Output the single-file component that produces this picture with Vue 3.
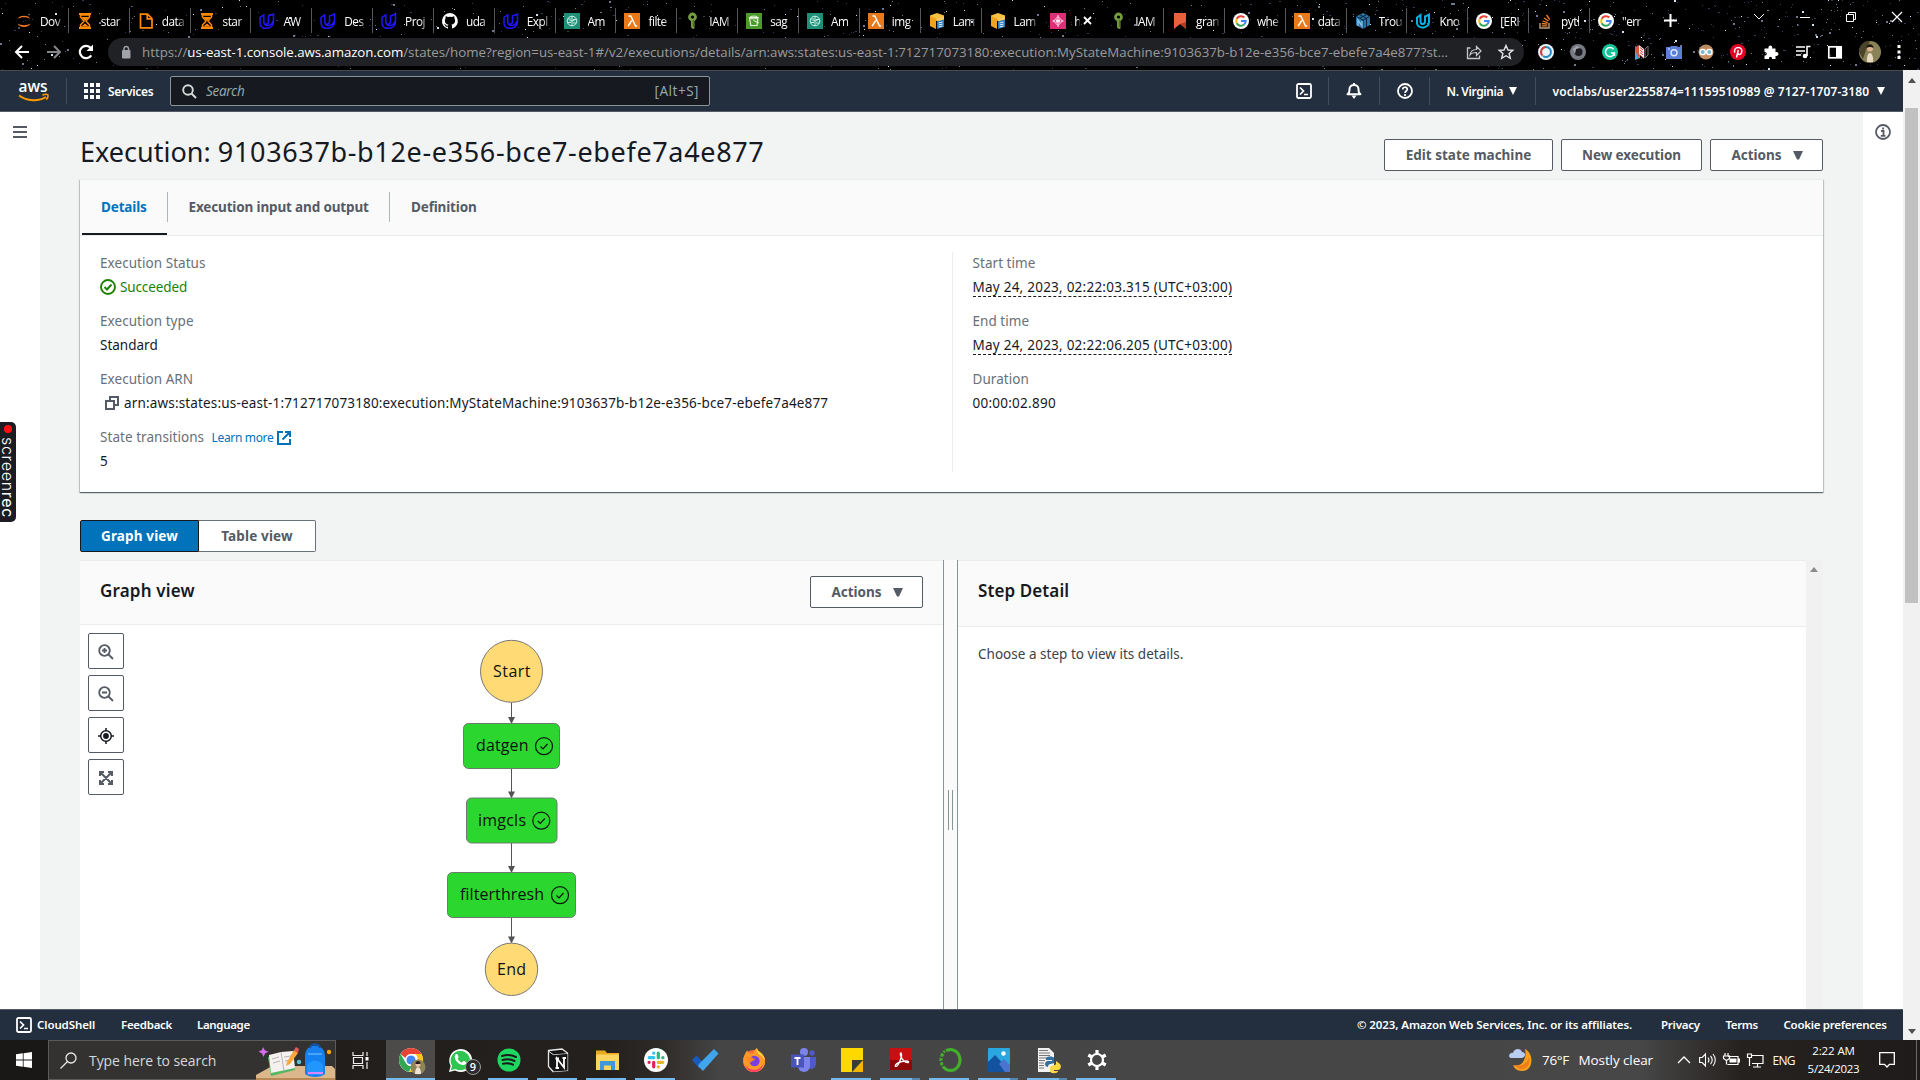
<script setup>
const tabIcons = {
  jupyter: '<path d="M1.500 6C3 1.500 13 1.500 14.500 6 11 3.800 5 3.800 1.500 6zM1.500 10.500C3 15 13 15 14.500 10.500 11 12.700 5 12.700 1.500 10.500z" fill="#f37726"/><circle cx="13" cy="1.600" r=".8" fill="#777"/><circle cx="3" cy="15" r=".9" fill="#777"/>',
  hourglass: '<path d="M2 1h12M2 15h12" stroke="#ff8a00" stroke-width="2"/><path d="M3.500 2h9v2L9 8l3.500 4v2h-9v-2L7 8 3.500 4z" fill="none" stroke="#ff8a00" stroke-width="1.500"/><path d="M4.500 4h7L8 8zM5 13l3-2.500 3 2.500z" fill="#ff8a00"/>',
  file: '<path d="M2.500 1.200h7L14 5.500v9.300H2.500zM9.300 1.500v4.300h4.400" fill="none" stroke="#ff8a00" stroke-width="1.700"/>',
  udacity: '<path d="M1 4.300L4.800 1.800v7c0 3.500 4.700 3 4.700-.5V3l5-2v8c0 7.500-13.500 9-13.500 1zM4.800 9c.5 5 8 4.500 9.400-1" fill="none" stroke="#2015ff" stroke-width="1.500"/>',
  udacity2: '<path d="M2 4.500L5.500 2v6.500c0 3.500 4.500 3.200 4.500-.3V3.500l4-2v7.500c0 6.500-11 7.500-12 1.300z" fill="none" stroke="#02b3e4" stroke-width="2"/>',
  github: '<path d="M8 0a8 8 0 0 0-2.500 15.600c.4.100.5-.2.500-.4v-1.500c-2.200.5-2.700-1-2.700-1-.4-.9-.9-1.200-.9-1.200-.7-.5.1-.5.1-.5.800.1 1.200.8 1.200.8.700 1.200 1.900.9 2.300.7.100-.5.300-.9.500-1.100-1.800-.2-3.600-.9-3.600-4 0-.9.300-1.600.8-2.100-.1-.2-.4-1 .1-2.100 0 0 .7-.2 2.200.8a7.600 7.600 0 0 1 4 0c1.500-1 2.200-.8 2.200-.8.4 1.100.2 1.900.1 2.100.5.600.8 1.300.8 2.100 0 3.100-1.900 3.800-3.700 4 .3.300.6.800.6 1.500v2.200c0 .2.100.5.600.4A8 8 0 0 0 8 0z" fill="#fff"/>',
  sagemaker: '<rect width="16" height="16" fill="#1d9077"/><circle cx="8" cy="8" r="4.800" fill="none" stroke="#d6f3ea"/><path d="M8 3.200v9.600M4 6h3M4 9.500h3M9 6.500h3M9 10h3M5.500 7.700h5" stroke="#d6f3ea" stroke-width=".9"/>',
  lambda: '<rect width="16" height="16" fill="#e9791b"/><path d="M4.500 3h2.300l4.700 10h1.700M7.700 7.500L4.200 13" fill="none" stroke="#fff" stroke-width="1.400"/>',
  iam: '<circle cx="7.500" cy="4" r="3" fill="none" stroke="#759c3e" stroke-width="2.800"/><path d="M6 6h3.500v9.500L8 16l-2-1.500z" fill="#759c3e"/><path d="M8.300 7v7" stroke="#4b612c"/>',
  s3: '<rect width="16" height="16" fill="#4b9b2c"/><path d="M3.500 4.500H12l-1 8H4.800z" fill="none" stroke="#e4f6d8" stroke-width="1.200"/><ellipse cx="7.800" cy="4.500" rx="4.200" ry="1.400" fill="none" stroke="#e4f6d8"/><path d="M7.500 7.500l5.500 2.500" fill="none" stroke="#e4f6d8"/>',
  cube: '<path d="M8 0l7 2.500v4L8 8 1 6.500v-4z" fill="#f7c143"/><path d="M1 3l6 2.500V16l-6-3z" fill="#f0a31e"/><path d="M8.500 5.500L15 4v5l-6.500 6z" fill="#f8c967"/><path d="M8 8.500l7-2V14l-7 2z" fill="#2779b8"/><path d="M9.500 10l4-1M9.500 12l4-1M9.500 14l4-1" stroke="#fff" stroke-width=".9"/>',
  stepfn: '<rect width="16" height="16" fill="#df2e76"/><path d="M8 3.500L12.500 8 8 12.500 3.500 8zM8 2v12M2.500 8h3M10.500 8h3" fill="none" stroke="#ffe2ef"/><path d="M6 6.500h4v3H6z" fill="#ffe2ef"/>',
  flag: '<path d="M2 0h12v16l-6-5-6 5z" fill="#e8613c"/><path d="M8 11l6-2v7z" fill="#b13a22"/>',
  google: '<circle cx="8" cy="8" r="8" fill="#fff"/><path d="M11.300 4.500A4.800 4.800 0 0 0 3.700 5.900" fill="none" stroke="#ea4335" stroke-width="2"/><path d="M3.700 5.900a4.800 4.800 0 0 0 0 4.300" fill="none" stroke="#fbbc05" stroke-width="2"/><path d="M3.700 10.200a4.800 4.800 0 0 0 7.400 1.400" fill="none" stroke="#34a853" stroke-width="2"/><path d="M11.100 11.600A4.800 4.800 0 0 0 12.700 8H8" fill="none" stroke="#4285f4" stroke-width="2"/>',
  numpy: '<path d="M8 0l7 3.500v8.500L8 16l-7-4V3.500z" fill="#2b76a8"/><path d="M1 3.500L8 7l7-3.500M8 7v9M4.500 1.700l7 3.600v8.700M11.500 1.700L4.500 5.300" fill="none" stroke="#0b2239"/><path d="M3 13V7l4 6V8" fill="none" stroke="#7cc0ea" stroke-width="1.500"/>',
  stack: '<path d="M3 10v5h9v-5" fill="none" stroke="#b9a079" stroke-width="1.400"/><path d="M4.800 12.800h5.500M4.900 10.500l5.500.6M5.500 8l5.300 1.600M7 5l4.600 3M9.500 2l3.200 4.500" stroke="#f48024" stroke-width="1.300"/>'
}
const tabs = [
  ['jupyter', 'Dov'], ['hourglass', 'star'], ['file', 'data'], ['hourglass', 'star'], ['udacity', 'AW'], ['udacity', 'Des'],
  ['udacity', 'Proj'], ['github', 'uda'], ['udacity', 'Expl'], ['sagemaker', 'Am'], ['lambda', 'filte'], ['iam', 'IAM'],
  ['s3', 'sag'], ['sagemaker', 'Am'], ['lambda', 'img'], ['cube', 'Lam'], ['cube', 'Lam'], ['stepfn', 'h', true],
  ['iam', 'IAM'], ['flag', 'gran'], ['google', 'whe'], ['lambda', 'data'], ['numpy', 'Trou'], ['udacity2', 'Kno'],
  ['google', '[ERI'], ['stack', 'pytl'], ['google', '"err']
]

const extensions = [
  '<circle cx="8" cy="8" r="8" fill="#e9f4fb"/><path d="M8 3a5 5 0 0 0-3.500 8.500" fill="none" stroke="#d63a3a" stroke-width="2"/><path d="M8 3a5 5 0 1 1-3 9" fill="none" stroke="#2a8ac4" stroke-width="2"/>',
  '<circle cx="8" cy="8" r="8" fill="#777983"/><circle cx="8.500" cy="8" r="4" fill="#1c1c22"/><path d="M3 5l4-3 3 2-4 1-1 5z" fill="#a5a7b0"/>',
  '<circle cx="8" cy="8" r="8" fill="#15c39a"/><path d="M11.500 5.200A4.500 4.500 0 1 0 12.400 9H9M12.400 9v3" fill="none" stroke="#fff" stroke-width="1.500"/>',
  '<path d="M1 2l5 4v8l-5 2z" fill="#4ea6d6"/><path d="M1 4l3-3 6 5v9l-4-4-2 3z" fill="#e0503f"/><path d="M5 1l5 4v9L5 10z" fill="#e7eef3"/><path d="M6 3.500l3 2.500M6 6l3 2.500M6 8.500l3 2.500" stroke="#d5402f"/><path d="M11 5l3-3v9l-3 3z" fill="none" stroke="#777"/>',
  '<path d="M0 3h4l1-1h6l1 1h4v12H0z" fill="#5b7fd6"/><circle cx="8" cy="8.700" r="3" fill="none" stroke="#dde6ff" stroke-width="1.400"/><path d="M2 5h2" stroke="#dde6ff"/>',
  '<circle cx="8" cy="8" r="7.500" fill="#c98f63"/><path d="M1.500 5C3 0 13 0 14.500 5 11 3 5 3 1.500 5z" fill="#b58a62"/><path d="M0 8h16" stroke="#4f5a60"/><circle cx="4.700" cy="8" r="2.700" fill="#7fb9cd" stroke="#fff" stroke-width="1.300"/><circle cx="11.300" cy="8" r="2.700" fill="#7fb9cd" stroke="#fff" stroke-width="1.300"/>',
  '<circle cx="8" cy="8" r="8" fill="#e60023"/><path d="M5 8.700C3.500 6 5.500 3.500 8.200 3.500c3 0 4.300 2.600 3.300 5.200-1 2.300-3.300 2.200-3.700.6M8.300 6L6.500 13.500" fill="none" stroke="#fff" stroke-width="1.500"/>',
  '<path d="M1.500 4.500h4c-.8-4 4.500-4 3.700 0h3.300v3.700c4-.8 4 4.500 0 3.700V15H9c.5-3-3.500-3-3 0H1.500v-3.500c3 .3 3-3.800 0-3.500z" fill="#fff"/>',
  '<path d="M1 3h9M1 7h9M1 11h5" stroke="#fff" stroke-width="1.600"/><circle cx="10" cy="12" r="2.300" fill="#fff"/><path d="M12 12V2.500h3.500" fill="none" stroke="#fff" stroke-width="1.600"/>',
  '<rect x="1.800" y="2.800" width="12.400" height="11" fill="none" stroke="#fff" stroke-width="1.700"/><path d="M9 3h5v10.500H9z" fill="#fff"/>'
]

const taskIcons = [
  { cls: 'active', svg: '<circle cx="12" cy="12" r="12" fill="#fff"/><path d="M12 0a12 12 0 0 1 10.400 6H12a6 6 0 0 0-5.600 4L1.600 6A12 12 0 0 1 12 0z" fill="#e94335"/><path d="M1.600 6l5.200 9A6 6 0 0 0 13 18l-3 5.800A12 12 0 0 1 1.600 6z" fill="#33a652"/><path d="M22.400 6A12 12 0 0 1 10 23.800L17.200 15A6 6 0 0 0 16 6z" fill="#fbc116"/><circle cx="12" cy="12" r="5" fill="#4285f4" stroke="#fff"/><circle cx="19" cy="19" r="7.500" fill="#8f8358"/><circle cx="19" cy="16.500" r="2.500" fill="#e4c3a2"/><path d="M16 26c0-9 6-9 6 0z" fill="#efe3d6"/><path d="M16.500 16c0-4 5-4 5 0z" fill="#2b1d18"/>' },
  { badge: '9', svg: '<path d="M1 24l1.600-6A11.500 11.500 0 1 1 7 22.500z" fill="#fff"/><path d="M2.800 22.200l1.300-4.500a9.700 9.700 0 1 1 3.500 3.300z" fill="#30c551"/><path d="M7.500 6.500c2-1.500 2.500 1 3 2.500.3.800-1.300 1.300-.8 2 1 2 2.500 3 4 3.500.8.200 1.200-1.800 2-1.500 2 .8 3.500 1.300 2.200 3C14 20 4 12 7.500 6.500z" fill="#fff"/>' },
  { cls: 'open', svg: '<circle cx="12" cy="12" r="11.500" fill="#1ed760"/><path d="M5 8c5-1.500 10-1 14 1M5.500 12c4.500-1.200 8.500-.7 12 1M6 15.700c4-1 7-.5 10 1" fill="none" stroke="#1b1b1b" stroke-width="2" stroke-linecap="round"/>' },
  { cls: 'open', svg: '<path d="M2.500 2.500L16 1l5.500 4v17.500L7 23.500l-4.500-5z" fill="#151515" stroke="#e8e8e8" stroke-width="1.300"/><path d="M3 3.500l4.500 3.300 14-1" fill="none" stroke="#e8e8e8"/><path d="M7.500 7l14-1v16.500l-14 1z" fill="#151515"/><path d="M11 20V10.500l7 9V10M9.500 10.500h3.500M16.500 10H20M9.500 20H13" stroke="#fff" stroke-width="1.800" fill="none"/>' },
  { cls: 'open', svg: '<path d="M1 2.500h9l2 2.500h12v17H1z" fill="#e9a820"/><path d="M1 6.500h23V22H1z" fill="#fcd462"/><path d="M5 13h15v9h-4v-4.500H9V22H5z" fill="#3f97dc"/>' },
  { cls: 'open', svg: '<circle cx="12" cy="12" r="12" fill="#fff"/><g stroke-width="3.200" stroke-linecap="round"><path d="M9.700 9.700H5.200M9.700 5v.2" stroke="#36c5f0"/><path d="M14.300 9.700V5.200M18.800 9.700h.2" stroke="#2eb67d"/><path d="M14.300 14.300h4.500M14.300 19v-.2" stroke="#ecb22e"/><path d="M9.700 14.300v4.500M5 14.300h.2" stroke="#e01e5a"/></g>' },
  { svg: '<path d="M-1 12l4.500-4.500 6.500 6.500-4 6z" fill="#195abd"/><path d="M6 16L21 1l4.500 4.500L10 23l-5-5z" fill="#41a5ee"/>' },
  { svg: '<circle cx="12" cy="13" r="11" fill="#ff7139"/><path d="M2 16C0 9 4 5 5 2c1 3 3 4 6 4 1-3 2-5 4-6 0 4 8 6 8 14 0 6-5 10-11 10S3 20 2 16z" fill="#ff9a2a"/><path d="M3 17c5 7 15 6 18-1-1 10-15 11-18 1z" fill="#ff3f62"/><circle cx="12.500" cy="13" r="5.200" fill="#7a3fe0"/><path d="M4 9c4-1 6 1 9 2-1 2-4 2-5 4-3-1-4-3-4-6z" fill="#ff8a1f"/><path d="M15 0c0 4 8 6 8 13-1-4-4-5-5-6-3-2-4-4-3-7z" fill="#ffdf3e"/>' },
  { svg: '<circle cx="13" cy="4" r="4" fill="#7b83eb"/><circle cx="21" cy="5" r="2.700" fill="#5059c9"/><path d="M16 9h9v7a5 5 0 0 1-8 4z" fill="#5059c9"/><path d="M7 9h12v9a6 6 0 0 1-12 0z" fill="#7b83eb"/><rect x="0" y="6.500" width="13" height="13" fill="#4b53bc"/><path d="M3.500 10h6M6.500 10v7" stroke="#fff" stroke-width="1.800"/>' },
  { cls: 'open', svg: '<path d="M1 0h22v12L12 24H1z" fill="#ffd800"/><path d="M23 12v12H12z" fill="#f5b400"/><path d="M23 12H12v12z" fill="#3a3a3a"/>' },
  { cls: 'open multi', svg: '<rect x="1" width="22" height="22" fill="#c81010"/><rect x="1" y="12" width="22" height="10" fill="#8f0707"/><path d="M12 5c-2 0 1 9 6.500 9.500 2 0 1-2-2-1.500-4 .5-9 2-10 4-1 2 1.500 2 3-1 1.500-3 4.500-9 2.500-11z" fill="none" stroke="#fff" stroke-width="1.400"/>' },
  { cls: 'open', svg: '<ellipse cx="12.500" cy="12" rx="9.500" ry="10.500" fill="none" stroke="#43b02a" stroke-width="3"/><path d="M4 4l4 3M2 9l4 1M1.500 14l4-1M3 19l4-3M7 2l2 4" stroke="#444" stroke-width="1.300"/>' },
  { cls: 'open multi', svg: '<rect x="1" width="22" height="24" rx="1" fill="#2aa7e0"/><path d="M1 14l7-7 15 16v1H1z" fill="#12529e"/><path d="M12 16l5-5 6 6v7h-5z" fill="#4b74cf"/><circle cx="16.500" cy="5.500" r="2.200" fill="#fff"/>' },
  { cls: 'open multi', svg: '<path d="M2 0h11l5 5v19H2z" fill="#f2f2f2"/><path d="M3 2.500h9M3 5h11M3 7.500h11M3 10h7M3 12.500h6M3 15h5M3 17.500h5M3 20h5" stroke="#777"/><path d="M10 10c0-2 8-2 8 0v5c-1 1-6 0-6 4-4 0-4-6 0-6h4v-1h-6z" fill="#336f9f"/><path d="M24 16c2 3 0 6-2 6h-4v1h4c0 3-8 3-8 0v-4c0-2 6-1 6-3v-3z" fill="#ffd845"/>' },
  { cls: 'open', svg: '<circle cx="12" cy="12" r="6" fill="none" stroke="#fff" stroke-width="2.200"/><g stroke="#fff" stroke-width="3.200"><path d="M12 2v4M12 18v4M3.300 7l3.500 2M17.200 15l3.500 2M3.300 17l3.500-2M17.200 9l3.500-2"/></g>' }
]

// Deterministic star field behind the browser tabs
function starField() {
  let s = 77
  const rnd = () => ((s = (s * 16807) % 2147483647) / 2147483647)
  const out = { dim: '', mid: '', bright: '' }
  for (let i = 0; i < 1500; i++) {
    const x = Math.floor(rnd() * 1920)
    const y = Math.floor(rnd() * 70)
    const keep = rnd()
    if (x < 1300 && keep > 0.5) continue
    const r = rnd()
    const k = r < 0.55 ? 'dim' : r < 0.88 ? 'mid' : 'bright'
    const w = rnd() > 0.8 ? 2 : 1
    out[k] += `M${x} ${y}h${w}v${w === 2 && r > 0.6 ? 2 : 1}h-${w}z`
  }
  return out
}
const stars = starField()

const leftDetails = [
  ['Execution Status', 'Succeeded', 'status'],
  ['Execution type', 'Standard', ''],
  ['Execution ARN', 'arn:aws:states:us-east-1:712717073180:execution:MyStateMachine:9103637b-b12e-e356-bce7-ebefe7a4e877', 'arn'],
  ['State transitions', '5', 'link']
]
const rightDetails = [
  ['Start time', 'May 24, 2023, 02:22:03.315 (UTC+03:00)', 'dashed'],
  ['End time', 'May 24, 2023, 02:22:06.205 (UTC+03:00)', 'dashed'],
  ['Duration', '00:00:02.890', 'num']
]

const zoomIcons = [
  '<circle cx="6.500" cy="6.500" r="5.300" fill="none" stroke="#545b64" stroke-width="1.800"/><path d="M10.500 10.500L15 15M6.500 4v5M4 6.500h5" stroke="#545b64" stroke-width="1.800"/>',
  '<circle cx="6.500" cy="6.500" r="5.300" fill="none" stroke="#545b64" stroke-width="1.800"/><path d="M10.500 10.500L15 15M4 6.500h5" stroke="#545b64" stroke-width="1.800"/>',
  '<circle cx="8" cy="8" r="5.300" fill="none" stroke="#16191f" stroke-width="1.500"/><circle cx="8" cy="8" r="2.900" fill="#16191f"/><path d="M8 0v3M8 13v3M0 8h3M13 8h3" stroke="#16191f" stroke-width="1.500"/>',
  '<path d="M2 6V2h4M10 2h4v4M14 10v4h-4M6 14H2v-4M2.500 2.500l11 11M13.500 2.500l-11 11" fill="none" stroke="#545b64" stroke-width="2"/>'
]

const states = [
  { name: 'datgen', x: 463.5, w: 96, y: 723.5, tx: 476, cx: 544, len: 52.5 },
  { name: 'imgcls', x: 466.5, w: 90.5, y: 798, tx: 478, cx: 541.3, len: 48 },
  { name: 'filterthresh', x: 447.5, w: 128, y: 872.5, tx: 460, cx: 560, len: 84 }
]
const edges = [[702.5, 723.5], [768.5, 798], [843, 872.5], [917.5, 943]]
</script>

<template>
  <div class="screen">
    <div class="chrome">
      <svg class="stars" width="1920" height="70">
        <path :d="stars.dim" fill="#343c55" /><path :d="stars.mid" fill="#707890" /><path :d="stars.bright" fill="#d5e2f2" />
      </svg>
      <div class="tabs">
        <div v-for="(t, i) in tabs" :key="i" class="tab" :class="{ nosep: i === 16 || i === 17 || i === 26 }">
          <svg width="16" height="16" viewBox="0 0 16 16" v-html="tabIcons[t[0]]"></svg>
          <span class="tab-text" :class="{ short: t[2] }">{{ t[1] }}</span>
          <svg v-if="t[2]" class="tab-x" width="9" height="9" viewBox="0 0 9 9"><path d="M1 1l7 7M8 1L1 8" stroke="#fff" stroke-width="1.800" /></svg>
        </div>
        <svg class="plus" width="13" height="13" viewBox="0 0 13 13"><path d="M6.500 0v13M0 6.500h13" stroke="#fff" stroke-width="2" /></svg>
        <div class="win">
          <svg width="46" height="28"><path d="M18 11l5 5 5-5" fill="none" stroke="#fff" /></svg>
          <svg width="46" height="28"><path d="M18 14.500h10" stroke="#fff" /></svg>
          <svg width="46" height="28"><path d="M18.500 11.500h7v7h-7zM20.500 11V9.500h7v7H26" fill="none" stroke="#fff" /></svg>
          <svg width="46" height="28"><path d="M18 9l10 10M28 9L18 19" stroke="#fff" stroke-width="1.200" /></svg>
        </div>
      </div>
      <div class="toolbar">
        <svg class="nav-ic" width="16" height="16" viewBox="0 0 16 16"><path d="M15 8H2M8 2L2 8l6 6" fill="none" stroke="#fff" stroke-width="2" /></svg>
        <svg class="nav-ic" width="16" height="16" viewBox="0 0 16 16"><path d="M1 8h13M8 2l6 6-6 6" fill="none" stroke="#85878a" stroke-width="2" /></svg>
        <svg class="nav-ic" width="16" height="16" viewBox="0 0 16 16"><path d="M13.300 11.300A6.200 6.200 0 1 1 12.800 4" fill="none" stroke="#fff" stroke-width="2.200" /><path d="M15 .5V7H8.500z" fill="#fff" /></svg>
        <div class="omnibox">
          <svg width="10" height="14" viewBox="0 0 10 14"><rect x="1" y="5" width="8.500" height="8.500" rx="1" fill="#a0a3a8" /><path d="M3 5.500V3.300a2.300 2.300 0 0 1 4.500 0v2.200" fill="none" stroke="#a0a3a8" stroke-width="1.500" /></svg>
          <div class="url"><span>https://</span><b>us-east-1.console.aws.amazon.com</b><span class="path">/states/home?region=us-east-1#/v2/executions/details/arn:aws:states:us-east-1:712717073180:execution:MyStateMachine:9103637b-b12e-e356-bce7-ebefe7a4e877?st...</span></div>
          <svg class="share" width="16" height="16" viewBox="0 0 16 16"><path d="M4.500 4H1.500v10.500h12v-3" fill="none" stroke="#c6c8ca" stroke-width="1.300" /><path d="M4 11c.5-4 3-5.500 6.500-5.500V2.500l4.500 4.500-4.500 4.500V8.500C7.500 8.500 5.500 9 4 11z" fill="none" stroke="#c6c8ca" stroke-width="1.200" /></svg>
          <svg class="star" width="16" height="16" viewBox="0 0 16 16"><path d="M8 1.500l2 4.500 4.800.4-3.700 3.100 1.200 4.800L8 11.700l-4.300 2.600 1.200-4.800L1.200 6.400 6 6z" fill="none" stroke="#e3e4e5" stroke-width="1.400" /></svg>
        </div>
        <div class="exts">
          <svg v-for="(e, i) in extensions" :key="i" width="16" height="16" viewBox="0 0 16 16" v-html="e"></svg>
          <svg width="22" height="22" viewBox="0 0 22 22"><circle cx="11" cy="11" r="11" fill="#8a8358" /><path d="M0 11A11 11 0 0 1 11 0l-4 9-3 9z" fill="#4a4429" /><circle cx="11" cy="7.500" r="3" fill="#e0b491" /><path d="M7.500 7c0-5 7-5 7 0-2-1.500-5-1.500-7 0z" fill="#1f1713" /><path d="M8 21c-1-12 7-12 6 0z" fill="#ead9c5" /></svg>
          <svg width="4" height="16" viewBox="0 0 4 16"><path d="M.5 1h3v3h-3zM.5 6.500h3v3h-3zM.5 12h3v3h-3z" fill="#fff" /></svg>
        </div>
      </div>
    </div>

    <div class="page">
      <div class="site">
        <header class="nav">
          <svg class="aws" width="32" height="21" viewBox="0 0 32 21"><text x="0.500" y="10.500" textLength="29">aws</text><path d="M1 14.500c8 6 20 6 27 1.500" fill="none" stroke="#ff9900" stroke-width="2" /><path d="M24.500 14.200c2-.9 4.500-.9 5.500-.3.300 1.500-.5 3.600-1.700 4.700" fill="none" stroke="#ff9900" stroke-width="1.500" /></svg>
          <i class="vr"></i>
          <svg class="grid" width="16" height="16" viewBox="0 0 16 16"><path d="M0 0h4v4H0zM6 0h4v4H6zM12 0h4v4h-4zM0 6h4v4H0zM6 6h4v4H6zM12 6h4v4h-4zM0 12h4v4H0zM6 12h4v4H6zM12 12h4v4h-4z" fill="#fff" /></svg>
          <span class="services">Services</span>
          <div class="search">
            <svg width="15" height="15" viewBox="0 0 15 15"><circle cx="6" cy="6" r="4.800" fill="none" stroke="#d5dbdb" stroke-width="1.900" /><path d="M9.500 9.500L14 14" stroke="#d5dbdb" stroke-width="2" /></svg>
            <em>Search</em><span>[Alt+S]</span>
          </div>
          <div class="nav-right">
            <svg class="cell c1" width="16" height="16" viewBox="0 0 16 16"><rect x="1" y="1" width="14" height="14" rx="1.500" fill="none" stroke="#fff" stroke-width="1.800" /><path d="M4 4.500L7.500 8 4 11.500M8 11.500h4" fill="none" stroke="#fff" stroke-width="1.700" /></svg>
            <i class="vr"></i>
            <svg class="cell" width="16" height="16" viewBox="0 0 16 16"><path d="M1.500 11.200c2.500-2 2-3 2-5.200 0-5.500 9-5.500 9 0 0 2.200-.5 3.200 2 5.200zM8 0v2" fill="none" stroke="#fff" stroke-width="2" stroke-linejoin="round" /><path d="M5.500 12.500h5L8 16z" fill="#fff" /></svg>
            <i class="vr"></i>
            <svg class="cell" width="16" height="16" viewBox="0 0 16 16"><circle cx="8" cy="8" r="7" fill="none" stroke="#fff" stroke-width="1.800" /><path d="M5.700 6.500c0-3 4.600-3 4.600-.2C10.300 8 8 8 8 10M8 11v2" fill="none" stroke="#fff" stroke-width="1.700" /></svg>
            <i class="vr"></i>
            <span class="region">N. Virginia</span>
            <svg class="car" width="8" height="8"><path d="M0 0h8L4 8z" fill="#fff" /></svg>
            <i class="vr"></i>
            <span class="user">voclabs/user2255874=11159510989 @ 7127-1707-3180</span>
            <svg class="car2" width="8" height="8"><path d="M0 0h8L4 8z" fill="#fff" /></svg>
          </div>
        </header>

        <div class="body">
          <aside class="rail"><svg width="14" height="12"><path d="M0 1h14M0 6h14M0 11h14" stroke="#545b64" stroke-width="2" /></svg></aside>
          <main>
            <div class="title-row">
              <h1>Execution: <span>9103637b-b12e-e356-bce7-ebefe7a4e877</span></h1>
              <div class="btns">
                <button class="b-edit">Edit state machine</button>
                <button class="b-new">New execution</button>
                <button class="b-act">Actions<svg width="10" height="9"><path d="M0 0h10L6 8.500H4z" fill="#545b64" /></svg></button>
              </div>
            </div>

            <section class="card">
              <nav class="card-tabs"><span class="on">Details</span><span>Execution input and output</span><span>Definition</span></nav>
              <div class="details">
                <dl>
                  <template v-for="d in leftDetails" :key="d[0]">
                    <dt>{{ d[0] }}<a v-if="d[2] === 'link'">Learn more<svg width="14" height="14" viewBox="0 0 14 14"><path d="M6 1H1v12h12V8M8 1h5v5M13 1L5.500 8.500" fill="none" stroke="#0073bb" stroke-width="2" /></svg></a></dt>
                    <dd :class="d[2]">
                      <svg v-if="d[2] === 'status'" width="16" height="16" viewBox="0 0 16 16"><circle cx="8" cy="8" r="7" fill="none" stroke="#1d8102" stroke-width="1.900" /><path d="M4.500 8l2.500 2.500 4.500-5" fill="none" stroke="#1d8102" stroke-width="1.900" /></svg>
                      <svg v-if="d[2] === 'arn'" width="14" height="14" viewBox="0 0 14 14"><path d="M1 5h8v8H1zM5 4.500V1h8v8H9.500" fill="none" stroke="#545b64" stroke-width="2" /></svg>
                      <span>{{ d[1] }}</span>
                    </dd>
                  </template>
                </dl>
                <dl class="right">
                  <template v-for="d in rightDetails" :key="d[0]"><dt>{{ d[0] }}</dt><dd :class="d[2]"><span>{{ d[1] }}</span></dd></template>
                </dl>
              </div>
            </section>

            <div class="segmented"><span class="sel">Graph view</span><span>Table view</span></div>

            <div class="split">
              <section class="graph">
                <header><h2>Graph view</h2><button class="b-act">Actions<svg width="10" height="9"><path d="M0 0h10L6 8.500H4z" fill="#545b64" /></svg></button></header>
                <div class="canvas">
                  <div class="zooms"><button v-for="(z, i) in zoomIcons" :key="i"><svg width="16" height="16" viewBox="0 0 16 16" v-html="z"></svg></button></div>
                  <svg class="flow" width="160" height="384" viewBox="432 625 160 384">
                    <g v-for="(e, i) in edges" :key="i"><path :d="`M511.500 ${e[0]}V${e[1] - 6}`" stroke="#545454" /><path :d="`M508 ${e[1] - 6.500}h7l-3.500 7z`" fill="#545454" /></g>
                    <circle cx="511.500" cy="671.300" r="31" class="end" /><text x="493" y="677" textLength="37.500">Start</text>
                    <circle cx="511.500" cy="969.300" r="26.200" class="end" /><text x="497" y="975" textLength="29">End</text>
                    <g v-for="s in states" :key="s.name">
                      <rect :x="s.x" :y="s.y" :width="s.w" height="45" rx="5" class="step" />
                      <text :x="s.tx" :y="s.y + 27.500" :textLength="s.len">{{ s.name }}</text>
                      <circle :cx="s.cx" :cy="s.y + 22.700" r="8.500" fill="none" stroke="#0b1a0b" stroke-width="1.200" />
                      <path :d="`M${s.cx - 3.5} ${s.y + 23}l2.500 2.500 4.500-5`" fill="none" stroke="#0b1a0b" stroke-width="1.200" />
                    </g>
                  </svg>
                </div>
              </section>
              <div class="grip"><i></i></div>
              <section class="step-detail"><header><h2>Step Detail</h2></header><p>Choose a step to view its details.</p></section>
              <div class="inner-scroll"><svg width="8" height="5"><path d="M0 5l4-5 4 5z" fill="#8b8b8b" /></svg></div>
            </div>
          </main>
          <aside class="rail info"><svg width="16" height="16" viewBox="0 0 16 16"><circle cx="8" cy="8" r="7" fill="none" stroke="#545b64" stroke-width="1.800" /><path d="M6 7h2.500v4.500M5.800 11.800h4.600M7.200 4.500H9" fill="none" stroke="#545b64" stroke-width="1.800" /></svg></aside>
        </div>

        <footer>
          <svg width="16" height="16" viewBox="0 0 16 16"><rect x="1" y="1" width="14" height="14" rx="1.500" fill="none" stroke="#fff" stroke-width="1.800" /><path d="M4 4.500L7.500 8 4 11.500M8 11.500h4" fill="none" stroke="#fff" stroke-width="1.700" /></svg>
          <span class="f1">CloudShell</span><span class="f2">Feedback</span><span class="f3">Language</span>
          <span class="f4">© 2023, Amazon Web Services, Inc. or its affiliates.</span><span class="f5">Privacy</span><span class="f6">Terms</span><span class="f7">Cookie preferences</span>
        </footer>
      </div>
      <div class="scrollbar">
        <svg width="8" height="5"><path d="M0 5l4-5 4 5z" fill="#505050" /></svg><i></i><svg width="8" height="5"><path d="M0 0h8L4 5z" fill="#505050" /></svg>
      </div>
      <div class="screenrec"><i></i><span>screen<b>rec</b></span></div>
    </div>

    <div class="taskbar">
      <div class="start"><svg width="16" height="16" viewBox="0 0 16 16"><path d="M0 2.300L6.800 1.300v6.300H0zM7.600 1.200L16 0v7.600H7.600zM0 8.400h6.800v6.400L0 13.800zM7.600 8.400H16V16l-8.400-1.200z" fill="#fff" /></svg></div>
      <div class="tsearch">
        <svg width="17" height="17" viewBox="0 0 17 17"><circle cx="11" cy="6" r="5" fill="none" stroke="#e8e8e8" stroke-width="1.300" /><path d="M7.500 9.500L.5 16.500" stroke="#e8e8e8" stroke-width="1.300" /></svg>
        <span>Type here to search</span>
        <svg class="art" width="79" height="38" viewBox="0 0 79 38">
          <path d="M0 38v-5l16-9h60l3 3v11z" fill="#dcb78c" /><path d="M0 36h79v2H0z" fill="#b88956" />
          <path d="M7 5l2 3.500 3.500 1L9 11.500 7.500 15 6 11.500 2.500 9.500 6 8z" fill="#d66cf0" />
          <path d="M12 15l14-4 11-1 2 18-24 6z" fill="#52b863" /><path d="M13 13l12-3 12-1 2 17-24 5z" fill="#f4f1ee" /><path d="M25 10l3 19M16 17l7-2M17 21l7-2M28 15l7-1M29 19l7-1" stroke="#b7b5ba" fill="none" />
          <path d="M31 20l7-12 4 3-8 11-4 2z" fill="#f9a93a" /><path d="M38 8l2-3 3 2-1 4z" fill="#e55b55" />
          <circle cx="43" cy="20" r="2.200" fill="#5bc3d8" /><circle cx="73" cy="10" r="2.200" fill="#f5a700" />
          <path d="M49 14C49 0 69 0 69 14v18c-4 4-16 4-20 0z" fill="#1680ee" /><path d="M54 6c1-5 9-5 10 0" fill="none" stroke="#1254a6" stroke-width="2" /><path d="M51 24c2-7 14-7 16 0v9H51z" fill="#2196ff" /><path d="M52 12h14" stroke="#7cc7ff" /><path d="M52 31h15" stroke="#d889ff" stroke-width="2" />
        </svg>
      </div>
      <svg class="tview" width="17" height="17" viewBox="0 0 17 17"><path d="M1 0v3.500h10V0M1 17v-3.500h10V17M1.500 5.500h9v6h-9zM15 0v4M15 10v7" fill="none" stroke="#eee" stroke-width="1.200" /><path d="M13.500 5h3v3.500h-3z" fill="#fff" /></svg>
      <div class="apps">
        <div v-for="(a, i) in taskIcons" :key="i" class="app" :class="a.cls">
          <svg width="24" height="24" viewBox="0 0 24 24" v-html="a.svg"></svg>
          <span v-if="a.badge" class="badge">{{ a.badge }}</span>
        </div>
      </div>
      <div class="tray">
        <svg width="24" height="24" viewBox="0 0 24 24"><path d="M16 1c9 4 9 22-3 22-5 0-8-3-9-6 9 3 14-6 12-16z" fill="#f9a11c" /><path d="M20 9c2 6-2 12-7 12-4 0-6-2-7-4 6 2 12-1 14-8z" fill="#f07c1c" /><path d="M2 10c-4-1-1-6 2-5 1-5 8-5 9-1 4 0 4 5 0 6z" fill="#b8cdf0" /></svg>
        <span class="temp">76°F</span><span class="cond">Mostly clear</span>
        <svg class="up" width="14" height="8"><path d="M1 7l6-6 6 6" fill="none" stroke="#fff" stroke-width="1.300" /></svg>
        <svg class="vol" width="17" height="14" viewBox="0 0 17 14"><path d="M.6 4.500h2.600L6.500 1v12L3.200 9.500H.6zM9 4.500c1.200 1.500 1.200 3.500 0 5M11.500 2.800c2 2.500 2 6 0 8.400M14 1c3 3.500 3 8.500 0 12" fill="none" stroke="#fff" stroke-width="1.100" /></svg>
        <svg class="bat" width="17" height="14" viewBox="0 0 17 14"><path d="M5 3.500h10v8H4.500M2 0v3M5 0v3M.5 3h6v2.500l-3 2-3-2zM3.500 7.500v4" fill="none" stroke="#fff" stroke-width="1.200" /><path d="M6.500 5.500h7v4h-7zM15 5.500h2v4h-2z" fill="#fff" /></svg>
        <svg class="net" width="17" height="15" viewBox="0 0 17 15"><path d="M5 2.500h11v8H5M10.500 10.500v3M6 14h8M.5 1h4v3.500h-4zM2.500 4.500V13" fill="none" stroke="#fff" stroke-width="1.200" /></svg>
        <span class="lang">ENG</span>
        <div class="clock"><span>2:22 AM</span><span class="date">5/24/2023</span></div>
        <svg class="note" width="16" height="17" viewBox="0 0 16 17"><path d="M.7.7h14.600v11.600h-4.800L8 15l-2.500-2.700H.7z" fill="none" stroke="#fff" stroke-width="1.300" /></svg>
        <i class="desk"></i>
      </div>
    </div>
  </div>
</template>

<style>
html, body { margin: 0; overflow: hidden; background: #000; }
</style>

<style scoped>
* { box-sizing: border-box; }
svg { flex: none; display: block; overflow: visible; }
.screen { width: 1920px; height: 1080px; display: flex; flex-direction: column; overflow: hidden; font-family: "Noto Sans", sans-serif; font-size: 13.5px; white-space: nowrap; color: #16191f; }

.chrome { height: 70px; background: #000; position: relative; font-family: "Open Sans", sans-serif; }
.stars { position: absolute; left: 0; top: 0; }
.tabs { position: relative; display: flex; align-items: center; height: 34px; padding: 7px 0 0 8px; }
.tab { width: 60.85px; height: 25px; flex: none; display: flex; align-items: center; padding-left: 8px; border-right: 1px solid #54575c; }
.tab.nosep { border-color: transparent; }
.tab-text { margin-left: 8px; width: 24px; color: #fff; font-size: 11.8px; letter-spacing: -.5px; line-height: 20px; mask-image: linear-gradient(90deg, #000 65%, rgba(0, 0, 0, .1)); }
.tab-text.short { width: 6px; }
.tab-x { margin-left: 3px; }
.plus { margin-left: 13px; }
.win { display: flex; margin-left: auto; margin-top: -7px; }
.toolbar { position: relative; display: flex; align-items: center; height: 28px; margin-top: 4px; padding-left: 14px; }
.nav-ic { margin-right: 16px; }
.omnibox { width: 1416px; height: 28px; margin-left: -2px; border-radius: 14px; background: #202124; display: flex; align-items: center; padding-left: 13px; }
.url { margin-left: 11px; width: 1324px; font-size: 13.3px; color: #999b9e; line-height: 20px; }
.url b { font-weight: 400; color: #fff; letter-spacing: -.08px; }
.star { margin-left: 16px; }
.exts { display: flex; align-items: center; justify-content: space-between; margin-left: 14px; width: 363px; }

.page { height: 970px; display: flex; position: relative; }
.site { width: 1903px; display: flex; flex-direction: column; }
.nav { height: 42px; flex: none; background: #232f3e; border-top: 1px solid #4b4b4b; border-bottom: 1px solid #545b64; display: flex; align-items: center; padding-left: 18px; color: #fff; font-weight: 600; font-size: 12px; }
.aws text { font: 600 15.5px "Open Sans", sans-serif; fill: #fff; }
.vr { width: 1px; height: 28px; background: #414d5c; flex: none; }
.aws + .vr { margin-left: 16px; height: 26px; }
.grid { margin-left: 17px; }
.services { margin-left: 8px; width: 62px; letter-spacing: -.3px; }
.search { width: 540px; height: 30px; border: 1px solid #879596; border-radius: 2px; background: #16191f; display: flex; align-items: center; padding: 0 10px 0 11px; color: #95a5a6; font-weight: 400; }
.search em { margin-left: 9px; font-size: 13.5px; letter-spacing: -.3px; }
.search span { margin-left: auto; font-size: 13.5px; letter-spacing: .5px; }
.nav-right { display: flex; align-items: center; margin-left: 586px; }
.cell { margin: 0 16.500px 0 17px; }
.cell.c1 { margin: 0 16px 0 0; }
.region { margin-left: 16.500px; width: 57px; letter-spacing: -.39px; }
.car { margin: 0 18px 0 5px; }
.user { margin-left: 17px; width: 318px; letter-spacing: .1px; }
.car2 { margin-left: 6px; }

.body { flex: 1; min-height: 0; display: flex; background: #f2f3f3; }
.rail { width: 40px; background: #fff; padding: 14px 0 0 13px; }
.rail.info { padding: 12px 0 0 12px; }
main { width: 1823px; padding: 0 39px 0 40px; overflow: hidden; }
.title-row { height: 67px; display: flex; align-items: flex-start; justify-content: space-between; }
h1 { margin: 20px 0 0; font-size: 27px; line-height: 40px; font-weight: 400; letter-spacing: .02px; }
h1 span { letter-spacing: .65px; }
.btns { display: flex; gap: 8px; padding: 27px 1px 0 0; }
button { font: 700 13.5px/30px "Noto Sans", sans-serif; color: #545b64; height: 32px; padding: 0; border: 1px solid #545b64; border-radius: 2px; background: #fff; }
.b-edit { width: 169px; }
.b-new { width: 141px; letter-spacing: -.09px; }
.b-act { width: 113px; display: flex; align-items: center; justify-content: center; gap: 11px; padding-left: 1px; }
.card { width: 1743px; height: 313px; background: #fff; border-top: 1px solid #eaeded; box-shadow: 0 1px 1px rgba(0, 28, 36, .5), 1px 1px 1px rgba(0, 28, 36, .15), -1px 1px 1px rgba(0, 28, 36, .15); }
.card-tabs { height: 56px; background: #fafafa; border-bottom: 1px solid #eaeded; display: flex; padding-left: 2px; font-weight: 700; color: #545b64; letter-spacing: -.15px; }
.card-tabs span { height: 55px; padding: 0 21px 0 22px; line-height: 55px; position: relative; }
.card-tabs span:first-child { width: 85px; padding-left: 19px; }
.card-tabs span:nth-child(2) { width: 222px; padding-left: 21.500px; }
.card-tabs span:not(:last-child)::after { content: ""; position: absolute; right: -1px; top: 12px; width: 1px; height: 30px; background: #aab7b8; }
.card-tabs .on { color: #0073bb; border-bottom: 2px solid #16191f; }
.details { display: flex; padding: 16px 0 0 20px; height: 237px; }
dl { margin: 0; width: 852px; height: 220px; }
dl.right { width: auto; border-left: 1px solid #eaeded; padding-left: 19.500px; }
dt { height: 23px; line-height: 23px; color: #687078; display: flex; letter-spacing: .05px; }
dt a { color: #0073bb; font-size: 12px; letter-spacing: -.35px; margin-left: 7.500px; display: flex; align-items: center; gap: 4px; line-height: 24px; }
dd { margin: 0 0 11px; height: 24px; line-height: 24px; display: flex; align-items: center; }
dd.status { color: #1d8102; gap: 4px; letter-spacing: -.12px; }
dd.arn { padding-left: 5px; gap: 5px; letter-spacing: .16px; }
dd.dashed { letter-spacing: .24px; }
dd.dashed span { border-bottom: 1px dashed #16191f; line-height: 18px; height: 19px; }
dd.num { letter-spacing: .25px; }
.segmented { display: flex; margin-top: 28px; font-weight: 700; height: 32px; line-height: 30px; text-align: center; color: #545b64; }
.segmented span { width: 117px; background: #fff; border: 1px solid #687078; border-left: 0; border-radius: 0 2px 2px 0; letter-spacing: .15px; }
.segmented .sel { width: 119px; background: #0073bb; color: #fff; border: 1px solid #16191f; border-radius: 2px 0 0 2px; }
.split { display: flex; margin-top: 8px; height: 450px; width: 1743px; }
.graph { width: 863px; background: #fff; }
.split header { background: #fafafa; border-top: 1px solid #eaeded; border-bottom: 1px solid #eaeded; height: 65px; display: flex; align-items: flex-start; justify-content: space-between; padding: 0 20px; }
h2 { margin: 18px 0 0; font-size: 17px; line-height: 24px; font-weight: 600; letter-spacing: .17px; }
.graph .b-act { margin-top: 15px; }
.canvas { position: relative; height: 385px; }
.zooms { display: flex; flex-direction: column; gap: 6px; padding: 8px; }
.zooms button { width: 36px; height: 36px; display: flex; align-items: center; justify-content: center; padding-top: 1px; }
.flow { position: absolute; left: 352px; top: 0; }
.flow text { font: 16px "Open Sans", sans-serif; fill: #111; }
.end { fill: #ffda75; stroke: #777; }
.step { fill: #2bd62e; stroke: #6f7a6f; }
.grip { width: 15px; background: #fafafa; border-left: 1px solid #879596; border-right: 1px solid #879596; padding: 230px 0 0 4px; }
.grip i { display: block; width: 5px; height: 40px; border: solid #879596; border-width: 0 1px; }
.step-detail { width: 848px; background: #fff; }
.step-detail header { height: 67px; }
.step-detail h2 { letter-spacing: .1px; }
.step-detail p { margin: 15px 20px; line-height: 24px; color: #3c4148; letter-spacing: .02px; }
.inner-scroll { width: 17px; background: #f1f1f1; padding: 7px 0 0 4px; }
footer { height: 31px; flex: none; background: #232f3e; border-top: 1px solid #545b64; display: flex; align-items: center; padding-left: 16px; color: #fff; font-weight: 600; font-size: 11.5px; }
footer span { flex: none; margin-top: -2px; }
.f1 { margin-left: 5px; width: 84px; letter-spacing: -.1px; }
.f2 { width: 76px; letter-spacing: -.28px; }
.f3 { width: 1160px; letter-spacing: -.34px; }
.f4 { width: 304px; letter-spacing: -.1px; }
.f5 { width: 64.500px; letter-spacing: -.23px; }
.f6 { width: 58px; letter-spacing: -.4px; }
.f7 { letter-spacing: -.27px; }
.scrollbar { width: 17px; background: #f1f1f1; display: flex; flex-direction: column; align-items: center; padding: 8px 0 6px; }
.scrollbar i { width: 13px; height: 495px; background: #c1c1c1; margin: 25px 0 auto; }
.screenrec { position: absolute; left: 0; top: 352px; width: 16px; height: 100px; background: #1b1d22; border-radius: 0 5px 5px 0; color: #fff; font: 16px/16px "Inter", sans-serif; writing-mode: vertical-rl; display: flex; align-items: center; padding-top: 3px; gap: 4px; }
.screenrec i { width: 8px; height: 8px; border-radius: 50%; background: #f11; flex: none; }
.screenrec span { letter-spacing: .7px; font-weight: 300; }

.taskbar { height: 40px; display: flex; align-items: center; color: #fff; font-family: "Open Sans", sans-serif; background: linear-gradient(90deg, #1f1c1a 0, #24201e 610px, #2e2a28 660px, #454545 720px, #474747 1640px, #262220 1740px, #1f1b1a 1920px); }
.start { width: 48px; height: 40px; background: #191817; padding: 12px 0 0 16px; }
.tsearch { width: 288px; height: 40px; background: #333231; border: 1px solid #5c5b5a; display: flex; align-items: center; padding-left: 11px; position: relative; font-size: 14px; letter-spacing: -.08px; color: #d8d8d8; }
.tsearch span { margin-left: 12px; }
.art { position: absolute; right: 0; top: 1px; }
.tview { margin-left: 16px; }
.apps { display: flex; margin-left: 17px; width: 740px; }
.app { width: 49px; height: 40px; flex: none; display: flex; align-items: center; justify-content: center; position: relative; }
.app.active { background: #4d4b49; border-bottom: 2px solid #76b9ed; padding-top: 2px; }
.app.open::after { content: ""; position: absolute; left: 4px; bottom: 0; width: 40px; height: 2px; background: #76b9ed; }
.app.multi::after { background: linear-gradient(90deg, #76b9ed 32px, #5587b0 32px); }
.badge { position: absolute; left: 30px; top: 19px; width: 16px; height: 16px; border-radius: 50%; background: #2b2b2b; border: 1px solid #999; font-size: 11px; font-weight: 600; line-height: 14px; text-align: center; }
.tray { margin-left: auto; display: flex; align-items: center; width: 411px; height: 40px; font-size: 13.5px; }
.temp { margin-left: 9px; width: 36.500px; letter-spacing: -.3px; }
.cond { width: 98px; letter-spacing: -.1px; }
.vol { margin-left: 8px; }
.bat { margin-left: 7px; }
.net { margin-left: 7px; }
.lang { margin-left: 9px; width: 28px; font-size: 12px; letter-spacing: -.7px; }
.clock { width: 66px; display: flex; flex-direction: column; text-align: center; font-size: 11.5px; line-height: 18px; letter-spacing: -.1px; }
.date { letter-spacing: -.3px; }
.note { margin-left: 12px; }
.desk { margin-left: auto; margin-right: 3px; width: 1px; height: 40px; background: #6b6968; }
</style>
